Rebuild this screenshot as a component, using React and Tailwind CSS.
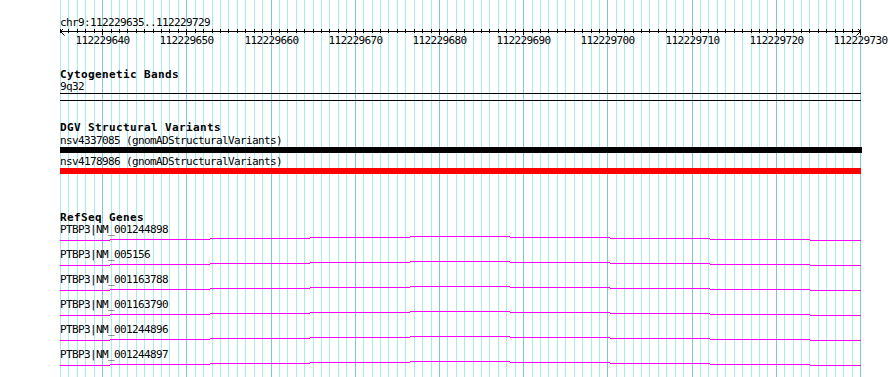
const X0 = 60;
const SCALE = 800 / 95;
const START = 112229635;
const pos = i => Math.round(X0 + i * SCALE);

const MINOR = '#a8eaee';
const MAJOR = '#80c4e8';

const genes = [
  'PTBP3|NM_001244898',
  'PTBP3|NM_005156',
  'PTBP3|NM_001163788',
  'PTBP3|NM_001163790',
  'PTBP3|NM_001244896',
  'PTBP3|NM_001244897',
];

// intron "hat" drawn as stepped 1px segments (x0, x1, y offset)
const hat = [
  [60, 110, 4],
  [110, 210, 3],
  [210, 310, 2],
  [310, 410, 1],
  [410, 510, 0],
  [510, 610, 1],
  [610, 710, 2],
  [710, 810, 3],
  [810, 861, 4],
];

const mono = "font-['DejaVu_Sans_Mono','Liberation_Mono',monospace] text-[11px] tracking-[-0.62px] text-black";
const boldMono = "font-['DejaVu_Sans_Mono','Liberation_Mono',monospace] text-[11px] font-bold tracking-[0.38px] text-black";

function Grid() {
  const lines = [];
  for (let i = 0; i <= 95; i++) {
    lines.push(
      <rect
        key={i}
        x={pos(i)}
        y={0}
        width={1}
        height={377}
        fill={i % 10 === 5 ? MAJOR : MINOR}
      />
    );
  }
  return (
    <svg className="absolute inset-0" width={890} height={377}>
      {lines}
    </svg>
  );
}

function Ruler() {
  const ticks = [];
  const labels = [];
  for (let i = 0; i <= 95; i++) {
    const major = i % 10 === 5;
    ticks.push(
      <rect key={i} x={pos(i)} y={0} width={1} height={major ? 6 : 4} fill="#000" />
    );
    if (major) {
      labels.push(
        <text key={i} x={pos(i) + 0.5} y={15} textAnchor="middle" fill="#000">
          {START + i}
        </text>
      );
    }
  }
  return (
    <svg className={`block ${mono}`} width={890} height={19}>
      <rect x={60} y={2} width={801} height={1} fill="#000" />
      {ticks}
      <path d="M64.5 -1.5 L60.5 2.5 L64.5 6.5" fill="none" stroke="#000" strokeWidth={1} />
      <path d="M856.5 -1.5 L860.5 2.5 L856.5 6.5" fill="none" stroke="#000" strokeWidth={1} />
      {labels}
    </svg>
  );
}

function GeneRow({ name }) {
  return (
    <div className="h-[25px]">
      <div className={`h-[13px] leading-[13px] pl-[60px] whitespace-pre ${mono}`}>{name}</div>
      <svg className="block" width={890} height={12}>
        {hat.map(([a, b, y]) => (
          <rect key={a} x={a} y={y} width={b - a} height={1} fill="#ff00ff" />
        ))}
      </svg>
    </div>
  );
}

export default function App() {
  return (
    <div className="relative w-[890px] h-[377px] overflow-hidden bg-white">
      <Grid />
      <div className="relative flex flex-col pt-[16px]">
        <div className={`h-[13px] leading-[13px] pl-[60px] whitespace-pre ${mono}`}>
          chr9:112229635..112229729
        </div>
        <Ruler />

        <div className={`mt-[20px] h-[12px] leading-[13px] pl-[60px] whitespace-pre ${boldMono}`}>
          Cytogenetic Bands
        </div>
        <div className={`h-[13px] leading-[13px] pl-[60px] whitespace-pre ${mono}`}>9q32</div>
        <div className="ml-[60px] w-[801px] h-[1px] bg-black" />
        <div className="mt-[6px] ml-[60px] w-[801px] h-[1px] bg-black" />

        <div className={`mt-[20px] h-[13px] leading-[13px] pl-[60px] whitespace-pre ${boldMono}`}>
          DGV Structural Variants
        </div>
        <div className={`h-[13px] leading-[13px] pl-[60px] whitespace-pre ${mono}`}>
          nsv4337085 (gnomADStructuralVariants)
        </div>
        <div className="ml-[60px] w-[802px] h-[6px] bg-black" />
        <div className={`mt-[2px] h-[13px] leading-[13px] pl-[60px] whitespace-pre ${mono}`}>
          nsv4178986 (gnomADStructuralVariants)
        </div>
        <div className="ml-[60px] w-[801px] h-[6px] bg-[#ff0000]" />

        <div className={`mt-[37px] h-[12px] leading-[13px] pl-[60px] whitespace-pre ${boldMono}`}>
          RefSeq Genes
        </div>
        {genes.map(g => (
          <GeneRow key={g} name={g} />
        ))}
      </div>
    </div>
  );
}
